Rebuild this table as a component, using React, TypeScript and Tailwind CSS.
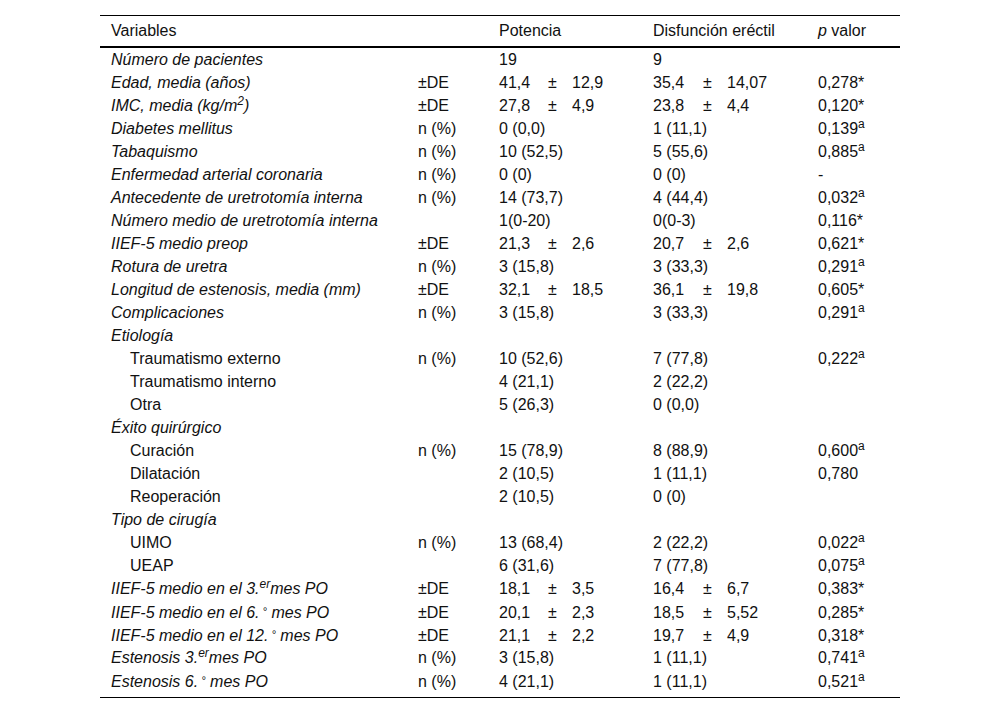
type Row = {
  label: React.ReactNode;
  italic?: boolean;
  indent?: boolean;
  stat?: string;
  a?: React.ReactNode; // single value for Potencia
  b?: React.ReactNode; // single value for Disfunción
  am?: [string, string]; // mean ± sd
  bm?: [string, string];
  p?: React.ReactNode;
};

const sa = (v: string) => (
  <>
    {v}
    <sup>a</sup>
  </>
);

const deg = <span className="text-[11px] align-[3px]"> °</span>;

const rows: Row[] = [
  { label: "Número de pacientes", italic: true, a: "19", b: "9" },
  { label: "Edad, media (años)", italic: true, stat: "±DE", am: ["41,4", "12,9"], bm: ["35,4", "14,07"], p: "0,278*" },
  {
    label: (
      <>
        IMC, media (kg/m<sup>2</sup>)
      </>
    ),
    italic: true,
    stat: "±DE",
    am: ["27,8", "4,9"],
    bm: ["23,8", "4,4"],
    p: "0,120*",
  },
  { label: "Diabetes mellitus", italic: true, stat: "n (%)", a: "0 (0,0)", b: "1 (11,1)", p: sa("0,139") },
  { label: "Tabaquismo", italic: true, stat: "n (%)", a: "10 (52,5)", b: "5 (55,6)", p: sa("0,885") },
  { label: "Enfermedad arterial coronaria", italic: true, stat: "n (%)", a: "0 (0)", b: "0 (0)", p: "-" },
  { label: "Antecedente de uretrotomía interna", italic: true, stat: "n (%)", a: "14 (73,7)", b: "4 (44,4)", p: sa("0,032") },
  { label: "Número medio de uretrotomía interna", italic: true, a: "1(0-20)", b: "0(0-3)", p: "0,116*" },
  { label: "IIEF-5 medio preop", italic: true, stat: "±DE", am: ["21,3", "2,6"], bm: ["20,7", "2,6"], p: "0,621*" },
  { label: "Rotura de uretra", italic: true, stat: "n (%)", a: "3 (15,8)", b: "3 (33,3)", p: sa("0,291") },
  { label: "Longitud de estenosis, media (mm)", italic: true, stat: "±DE", am: ["32,1", "18,5"], bm: ["36,1", "19,8"], p: "0,605*" },
  { label: "Complicaciones", italic: true, stat: "n (%)", a: "3 (15,8)", b: "3 (33,3)", p: sa("0,291") },
  { label: "Etiología", italic: true },
  { label: "Traumatismo externo", indent: true, stat: "n (%)", a: "10 (52,6)", b: "7 (77,8)", p: sa("0,222") },
  { label: "Traumatismo interno", indent: true, a: "4 (21,1)", b: "2 (22,2)" },
  { label: "Otra", indent: true, a: "5 (26,3)", b: "0 (0,0)" },
  { label: "Éxito quirúrgico", italic: true },
  { label: "Curación", indent: true, stat: "n (%)", a: "15 (78,9)", b: "8 (88,9)", p: sa("0,600") },
  { label: "Dilatación", indent: true, a: "2 (10,5)", b: "1 (11,1)", p: "0,780" },
  { label: "Reoperación", indent: true, a: "2 (10,5)", b: "0 (0)" },
  { label: "Tipo de cirugía", italic: true },
  { label: "UIMO", indent: true, stat: "n (%)", a: "13 (68,4)", b: "2 (22,2)", p: sa("0,022") },
  { label: "UEAP", indent: true, a: "6 (31,6)", b: "7 (77,8)", p: sa("0,075") },
  {
    label: (
      <>
        IIEF-5 medio en el 3.<sup>er</sup>mes PO
      </>
    ),
    italic: true,
    stat: "±DE",
    am: ["18,1", "3,5"],
    bm: ["16,4", "6,7"],
    p: "0,383*",
  },
  {
    label: <>IIEF-5 medio en el 6.{deg} mes PO</>,
    italic: true,
    stat: "±DE",
    am: ["20,1", "2,3"],
    bm: ["18,5", "5,52"],
    p: "0,285*",
  },
  {
    label: <>IIEF-5 medio en el 12.{deg} mes PO</>,
    italic: true,
    stat: "±DE",
    am: ["21,1", "2,2"],
    bm: ["19,7", "4,9"],
    p: "0,318*",
  },
  {
    label: (
      <>
        Estenosis 3.<sup>er</sup>mes PO
      </>
    ),
    italic: true,
    stat: "n (%)",
    a: "3 (15,8)",
    b: "1 (11,1)",
    p: sa("0,741"),
  },
  {
    label: <>Estenosis 6.{deg} mes PO</>,
    italic: true,
    stat: "n (%)",
    a: "4 (21,1)",
    b: "1 (11,1)",
    p: sa("0,521"),
  },
];

const grid =
  "grid grid-cols-[318px_81px_49px_24px_81px_50px_24px_91px_82px] items-center";

function Group({ single, pair }: { single?: React.ReactNode; pair?: [string, string] }) {
  if (pair) {
    return (
      <>
        <div>{pair[0]}</div>
        <div>±</div>
        <div>{pair[1]}</div>
      </>
    );
  }
  return <div className="col-span-3 whitespace-nowrap">{single}</div>;
}

export default function App() {
  return (
    <div className="min-h-screen bg-white pt-[15px] font-['Liberation_Sans',Arial,sans-serif] text-[16px] text-[#111]">
      <div className="mx-auto w-[800px] border-t border-b border-black pb-[5px]">
        {/* Header */}
        <div className={`${grid} h-[32px] border-b-2 border-black`}>
          <div className="pl-[11px]">Variables</div>
          <div />
          <div className="col-span-3">Potencia</div>
          <div className="col-span-3">Disfunción eréctil</div>
          <div>
            <i>p</i> valor
          </div>
        </div>

        {/* Body */}
        {rows.map((r, i) => (
          <div key={i} className={`${grid} h-[23px] leading-[23px]`}>
            <div
              className={`whitespace-nowrap ${r.indent ? "pl-[30px]" : "pl-[11px]"} ${r.italic ? "italic" : ""}`}
            >
              {r.label}
            </div>
            <div>{r.stat}</div>
            <Group single={r.a} pair={r.am} />
            <Group single={r.b} pair={r.bm} />
            <div className="whitespace-nowrap">{r.p}</div>
          </div>
        ))}
      </div>
    </div>
  );
}
